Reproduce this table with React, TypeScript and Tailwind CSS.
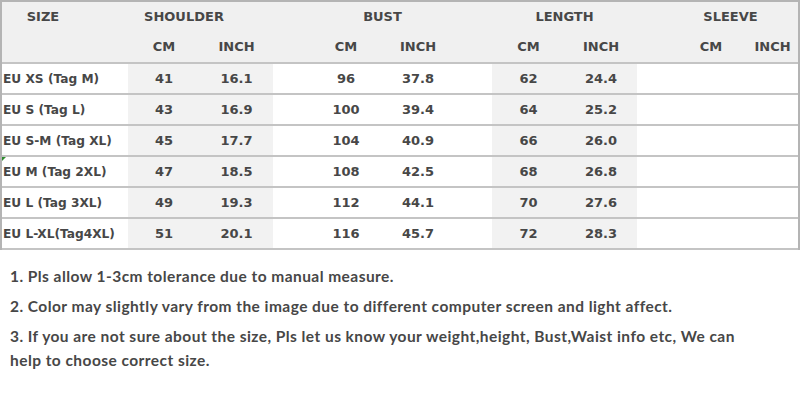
import React from "react";

const rows = [
  ["EU XS (Tag M)", "41", "16.1", "96", "37.8", "62", "24.4"],
  ["EU S (Tag L)", "43", "16.9", "100", "39.4", "64", "25.2"],
  ["EU S-M (Tag XL)", "45", "17.7", "104", "40.9", "66", "26.0"],
  ["EU M (Tag 2XL)", "47", "18.5", "108", "42.5", "68", "26.8"],
  ["EU L (Tag 3XL)", "49", "19.3", "112", "44.1", "70", "27.6"],
  ["EU L-XL(Tag4XL)", "51", "20.1", "116", "45.7", "72", "28.3"],
];

const tableFont = { fontFamily: '"DejaVu Sans", Verdana, sans-serif' };

export default function App() {
  return (
    <div className="w-[800px] h-[411px] bg-white text-[#474747] overflow-hidden">
      <div
        className="relative w-[800px] border-t-2 border-l-2 border-r-2 border-[#b4b4b4] box-border"
        style={tableFont}
      >
        <div className="bg-[#f0f0f0] border-b-2 border-[#c4c4c4]">
          <div className="flex h-[29px] items-center text-[13px] font-bold">
            <div className="w-[82px] text-center">SIZE</div>
            <div className="w-[44px]" />
            <div className="w-[112px] text-center">SHOULDER</div>
            <div className="w-[33px]" />
            <div className="w-[219px] text-center">BUST</div>
            <div className="w-[145px] text-center">LENGTH</div>
            <div className="w-[161px] pl-[26px] text-center">SLEEVE</div>
          </div>
          <div className="flex h-[31px] items-center text-[13px] font-bold">
            <div className="w-[126px]" />
            <div className="w-[72px] text-center">CM</div>
            <div className="w-[73px] text-center">INCH</div>
            <div className="w-[37px]" />
            <div className="w-[72px] text-center">CM</div>
            <div className="w-[72px] text-center">INCH</div>
            <div className="w-[38px]" />
            <div className="w-[73px] text-center">CM</div>
            <div className="w-[72px] text-center">INCH</div>
            <div className="w-[38px]" />
            <div className="w-[72px] text-center">CM</div>
            <div className="w-[51px] text-center">INCH</div>
          </div>
        </div>
        {rows.map((r, i) => (
          <div
            key={i}
            className="flex h-[31px] border-b-2 border-[#c4c4c4] box-border font-bold"
          >
            <div className="w-[126px] pl-[1px] pt-[1px] flex items-center text-[12.2px] whitespace-nowrap">
              {r[0]}
            </div>
            <div className="w-[145px] flex items-center bg-[#f2f2f2] text-[13px]">
              <div className="w-[72px] text-center">{r[1]}</div>
              <div className="w-[73px] text-center">{r[2]}</div>
            </div>
            <div className="w-[219px] flex items-center text-[13px]">
              <div className="w-[37px]" />
              <div className="w-[72px] text-center">{r[3]}</div>
              <div className="w-[72px] text-center">{r[4]}</div>
            </div>
            <div className="w-[145px] flex items-center bg-[#f2f2f2] text-[13px]">
              <div className="w-[73px] text-center">{r[5]}</div>
              <div className="w-[72px] text-center">{r[6]}</div>
            </div>
            <div className="flex-1" />
          </div>
        ))}
        <div className="absolute left-0 top-[155px] w-0 h-0 border-t-[4px] border-r-[4px] border-t-[#2e8b2e] border-r-transparent" />
      </div>
      <div
        className="pl-[10px] pt-[14px] text-[15.5px] tracking-[0.45px] font-bold text-[#474747] whitespace-nowrap"
        style={{ fontFamily: '"Lato", "Noto Sans", sans-serif' }}
      >
        <p className="leading-[24px]">1. Pls allow 1-3cm tolerance due to manual measure.</p>
        <p className="leading-[24px] mt-[6px]">
          2. Color may slightly vary from the image due to different computer screen and light affect.
        </p>
        <p className="leading-[24px] mt-[6px]">
          3. If you are not sure about the size, Pls let us know your weight,height, Bust,Waist info etc, We can
          <br />
          help to choose correct size.
        </p>
      </div>
    </div>
  );
}
